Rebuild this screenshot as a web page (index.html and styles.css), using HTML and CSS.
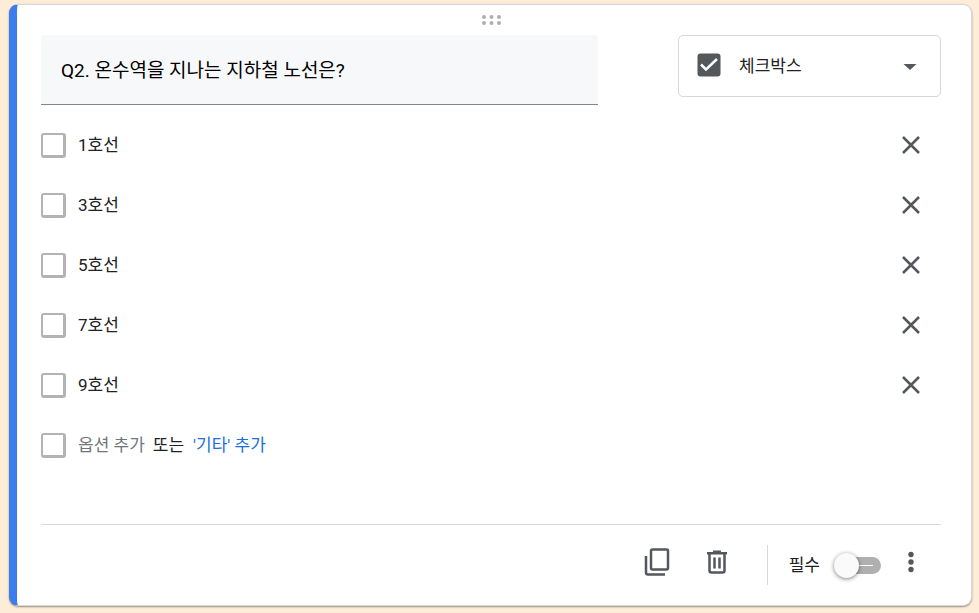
FILE: index.html
```html
<!DOCTYPE html>
<html lang="ko">
<head>
    <meta charset="UTF-8">
    <meta name="viewport" content="width=device-width, initial-scale=1.0">
    <title>설문지</title>
    <link rel="stylesheet" href="styles.css">
</head>
<body>
    <form class="card">
        <button type="button" class="drag" aria-label="이동">
            <svg width="19" height="10" viewBox="0 0 19 10">
                <circle cx="2" cy="2" r="2"/><circle cx="9.500" cy="2" r="2"/><circle cx="17" cy="2" r="2"/>
                <circle cx="2" cy="8" r="2"/><circle cx="9.500" cy="8" r="2"/><circle cx="17" cy="8" r="2"/>
            </svg>
        </button>

        <!-- 질문 제목과 유형 -->
        <div class="question">
            <input type="text" class="title" aria-label="질문" value="Q2. 온수역을 지나는 지하철 노선은?">
            <div class="type">
                <svg class="type-icon" width="24" height="24" viewBox="0 0 24 24">
                    <rect x="0.5" y="0.5" width="23" height="23" rx="3" fill="#54575c"/>
                    <path d="M4 11.5l5 5L20 6" fill="none" stroke="#fff" stroke-width="2.5"/>
                </svg>
                <select class="type-select" aria-label="질문 유형">
                    <option>체크박스</option>
                </select>
                <svg class="type-arrow" width="14" height="6" viewBox="0 0 14 6"><path d="M0.5 0h13L7 6z" fill="#54575c"/></svg>
            </div>
        </div>

        <!-- 옵션 목록 -->
        <ul class="options">
            <li class="option">
                <input type="checkbox" class="box" aria-label="1호선" disabled>
                <input type="text" class="option-text" aria-label="옵션 1" value="1호선">
                <button type="button" class="icon-button" aria-label="옵션 1 삭제">
                    <svg width="18" height="18" viewBox="0 0 18 18"><path class="line" d="M1 1l16 16M17 1L1 17"/></svg>
                </button>
            </li>
            <li class="option">
                <input type="checkbox" class="box" aria-label="3호선" disabled>
                <input type="text" class="option-text" aria-label="옵션 2" value="3호선">
                <button type="button" class="icon-button" aria-label="옵션 2 삭제">
                    <svg width="18" height="18" viewBox="0 0 18 18"><path class="line" d="M1 1l16 16M17 1L1 17"/></svg>
                </button>
            </li>
            <li class="option">
                <input type="checkbox" class="box" aria-label="5호선" disabled>
                <input type="text" class="option-text" aria-label="옵션 3" value="5호선">
                <button type="button" class="icon-button" aria-label="옵션 3 삭제">
                    <svg width="18" height="18" viewBox="0 0 18 18"><path class="line" d="M1 1l16 16M17 1L1 17"/></svg>
                </button>
            </li>
            <li class="option">
                <input type="checkbox" class="box" aria-label="7호선" disabled>
                <input type="text" class="option-text" aria-label="옵션 4" value="7호선">
                <button type="button" class="icon-button" aria-label="옵션 4 삭제">
                    <svg width="18" height="18" viewBox="0 0 18 18"><path class="line" d="M1 1l16 16M17 1L1 17"/></svg>
                </button>
            </li>
            <li class="option">
                <input type="checkbox" class="box" aria-label="9호선" disabled>
                <input type="text" class="option-text" aria-label="옵션 5" value="9호선">
                <button type="button" class="icon-button" aria-label="옵션 5 삭제">
                    <svg width="18" height="18" viewBox="0 0 18 18"><path class="line" d="M1 1l16 16M17 1L1 17"/></svg>
                </button>
            </li>
            <li class="option">
                <input type="checkbox" class="box" aria-label="새 옵션" disabled>
                <div class="add">
                    <button type="button" class="add-option">옵션 추가</button>
                    <span>또는</span>
                    <button type="button" class="add-other">'기타' 추가</button>
                </div>
            </li>
        </ul>

        <!-- 하단 도구 -->
        <div class="footer">
            <button type="button" class="icon-button" aria-label="복사">
                <svg width="26" height="28" viewBox="0 0 26 28">
                    <rect class="line" x="7" y="1.5" width="17" height="20" rx="1.5"/>
                    <path class="line" d="M2 8v16.5q0 2 2 2h17"/>
                </svg>
            </button>
            <button type="button" class="icon-button" aria-label="삭제">
                <svg width="20" height="24" viewBox="0 0 20 24">
                    <path d="M0 2h6V0.500h8V2h6v2.500H0z" fill="#54575c"/>
                    <path class="line" d="M2.500 4v16.500q0 2 2 2h11q2 0 2-2V4M7.500 7.500v11M12.500 7.500v11"/>
                </svg>
            </button>
            <div class="required">
                <label for="required">필수</label>
                <input type="checkbox" class="toggle" id="required" role="switch">
            </div>
            <button type="button" class="icon-button" aria-label="더보기">
                <svg width="6" height="22" viewBox="0 0 6 22" fill="#54575c">
                    <circle cx="3" cy="3.500" r="2.700"/><circle cx="3" cy="11" r="2.700"/><circle cx="3" cy="18.500" r="2.700"/>
                </svg>
            </button>
        </div>
    </form>
</body>
</html>
```

FILE: styles.css
```css
* {
    box-sizing: border-box;
}
body {
    margin: 0;
    padding: 4px 7px 7px 9px;
    background-color: #fdedd8;
    color: #202124;
}
body, input, select, button {
    font-family: Roboto, "Noto Sans CJK KR", sans-serif;
    font-size: 17px;
}
button {
    padding: 0;
    border: none;
    background: none;
    cursor: pointer;
}
svg {
    display: block;
}
.line {
    fill: none;
    stroke: #54575c;
    stroke-width: 2.5;
}
.card {
    padding: 0 30px 0 24px;
    background-color: white;
    border: 1px solid #d6d7da;
    border-left: 8px solid #3b7ded;
    border-radius: 9px;
    box-shadow: 0 1px 2px rgba(0, 0, 0, 0.4);
}
.drag {
    display: flex;
    justify-content: center;
    align-items: center;
    width: 100%;
    height: 30px;
    fill: #b0b0b0;
    cursor: move;
}
.question {
    display: flex;
    align-items: flex-start;
    gap: 80px;
}
.title {
    flex: 1;
    min-width: 0;
    height: 70px;
    padding: 0 20px 3px;
    border: none;
    border-bottom: 1px solid #80868b;
    border-radius: 4px 4px 0 0;
    background-color: #f7f8fa;
    color: black;
    font-size: 19px;
}
.type {
    position: relative;
    width: 263px;
}
.type-select {
    width: 100%;
    height: 62px;
    padding: 0 60px;
    appearance: none;
    border: 1px solid #d6d8dc;
    border-radius: 5px;
    background-color: white;
    color: #202124;
}
.type-icon, .type-arrow {
    position: absolute;
    pointer-events: none;
}
.type-icon {
    left: 19px;
    top: 18px;
}
.type-arrow {
    right: 24px;
    top: 29px;
}
.options {
    margin: 10px 0 49px;
    padding: 0;
    list-style: none;
}
.option {
    display: flex;
    align-items: center;
    gap: 12px;
    height: 60px;
}
.box {
    appearance: none;
    flex: none;
    width: 25px;
    height: 25px;
    margin: 0;
    border: 2px solid #b3b3b3;
    border-width: 2px 3px 3px 2px;
    border-radius: 3px;
}
.option-text {
    flex: 1;
    min-width: 0;
    padding: 0 0 4px;
    border: none;
    color: #202124;
}
.icon-button {
    display: flex;
    justify-content: center;
    align-items: center;
    width: 60px;
    height: 60px;
}
.add {
    display: flex;
    align-items: center;
    gap: 8px;
    padding-bottom: 4px;
}
.add-option {
    color: #70757a;
}
.add-other {
    padding-left: 1px;
    color: #1a6fe0;
}
.footer {
    display: flex;
    justify-content: flex-end;
    align-items: center;
    height: 81px;
    border-top: 1px solid #d6d8dc;
}
.footer .icon-button {
    padding-bottom: 6px;
}
.required {
    display: flex;
    align-items: center;
    gap: 19px;
    height: 40px;
    margin-left: 20px;
    padding-left: 21px;
    border-left: 1px solid #d6d8dc;
}
.required label {
    padding-bottom: 4px;
}
.toggle {
    appearance: none;
    position: relative;
    width: 42px;
    height: 17px;
    margin: 0;
    border-radius: 9px;
    background: linear-gradient(white, white) 20px 8px / 14px 1px no-repeat #b0b0b0;
    cursor: pointer;
}
.toggle::before {
    content: "";
    position: absolute;
    left: -5px;
    top: -4px;
    width: 25px;
    height: 25px;
    border-radius: 50%;
    background-color: #fafafa;
    box-shadow: 0 1px 4px rgba(0, 0, 0, 0.5);
}
```
